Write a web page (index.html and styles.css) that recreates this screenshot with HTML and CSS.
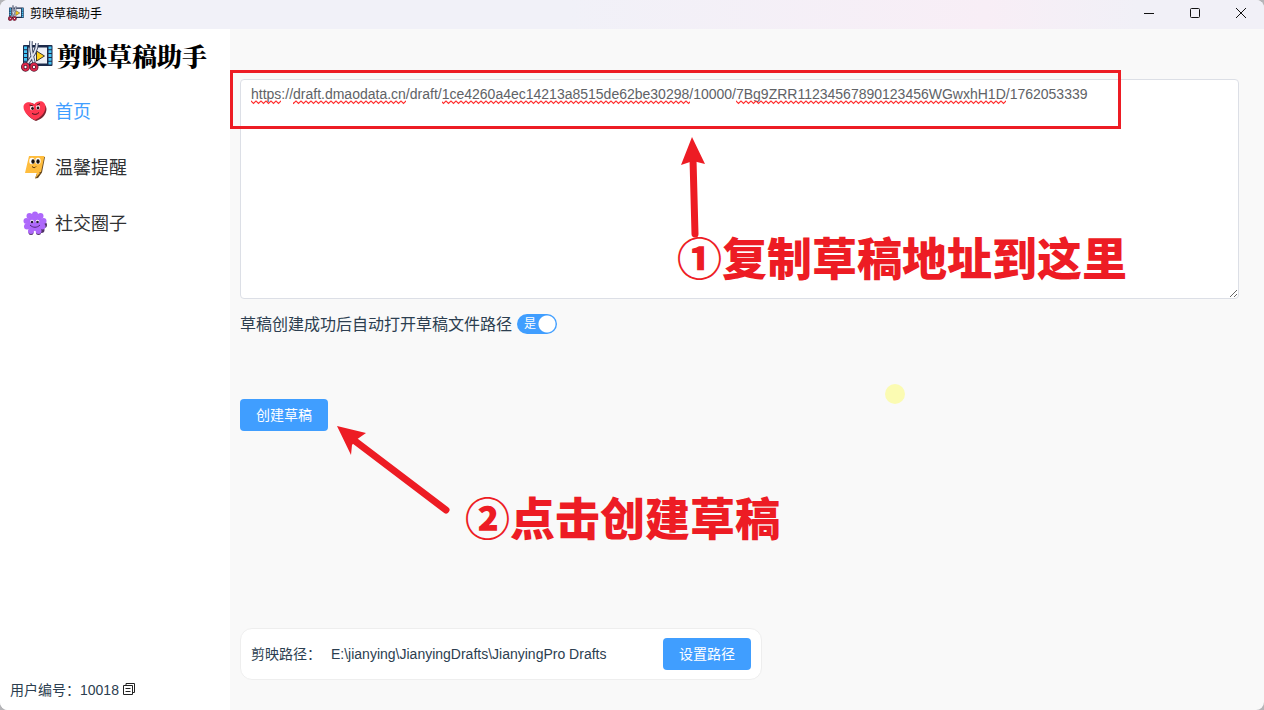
FILE: index.html
```html
<!DOCTYPE html>
<html lang="zh-CN">
<head>
  <meta charset="UTF-8" />
  <title>剪映草稿助手</title>
  <link rel="stylesheet" href="styles.css">
</head>
<body>

  <!-- 公用图标 -->
  <svg class="defs" width="0" height="0" aria-hidden="true">
    <symbol id="icon-logo" viewBox="0 0 32 32">
      <rect x="2" y="5" width="29.500" height="21" rx="1" fill="#1c2a4a" />
      <rect x="7.500" y="7.500" width="18.500" height="16" fill="#eef0f6" />
      <path d="M4.500 6.500v18M29 6.500v18" stroke="#45c4f5" stroke-width="3" stroke-dasharray="2.800 1" />
      <path d="M15.500 11v10l8-5z" fill="#ffd117" stroke="#3b3630" stroke-width="1" />
      <path d="M10 1c-1 8 1 15 3 22M16 3c0 8-5 14-10 21" stroke="#37415c" stroke-width="3.500" fill="none" />
      <path d="M10 1c-1 8 1 15 3 22M16 3c0 8-5 14-10 21" stroke="#dfe3ee" stroke-width="1.800" fill="none" />
      <ellipse cx="4.500" cy="27" rx="2.800" ry="3" fill="#fff" stroke="#4a1930" stroke-width="3.400" />
      <ellipse cx="13" cy="27" rx="2.800" ry="3" fill="#fff" stroke="#4a1930" stroke-width="3.400" />
      <ellipse cx="4.500" cy="27" rx="2.800" ry="3" fill="none" stroke="#db2849" stroke-width="1.900" />
      <ellipse cx="13" cy="27" rx="2.800" ry="3" fill="none" stroke="#db2849" stroke-width="1.900" />
    </symbol>
  </svg>

  <div class="window">
    <!-- 标题栏 -->
    <header class="title-bar">
      <svg class="title-icon"><use href="#icon-logo" /></svg>
      <span class="title-text">剪映草稿助手</span>
      <div class="window-buttons">
        <button type="button" aria-label="最小化"><svg viewBox="0 0 12 12"><path d="M1 6.500h10" /></svg></button>
        <button type="button" aria-label="最大化"><svg viewBox="0 0 12 12"><rect x="1.500" y="1.500" width="9" height="9" rx="1" /></svg></button>
        <button type="button" aria-label="关闭"><svg viewBox="0 0 12 12"><path d="M1 1l10 10M11 1L1 11" /></svg></button>
      </div>
    </header>

    <div class="content">
      <!-- 左侧菜单 -->
      <aside class="sidebar">
        <div class="logo">
          <svg class="logo-icon"><use href="#icon-logo" /></svg>
          <span>剪映草稿助手</span>
        </div>

        <nav class="menu">
          <a href="#" class="menu-item active">
            <svg viewBox="0 0 24 24">
              <path d="M13 22C7 20 2 14 1.500 9c0-5 6-7 11-3 5-4 11-1 11 4 0 5-4 10-10.500 12z" fill="#7d2430" />
              <path d="M12 21C6 18.500 .5 13 .5 8 .5 3 7 1.500 11 5.500 15 .5 22.500 1.500 22.500 8 22.500 14 17 19 12 21z" fill="#ff3850" />
              <ellipse cx="9" cy="9" rx="2" ry="2.300" fill="#fff" /><ellipse cx="15" cy="8.500" rx="2" ry="2.300" fill="#fff" />
              <circle cx="9.500" cy="9.500" r="1.400" fill="#241318" /><circle cx="15" cy="9" r="1.400" fill="#241318" />
              <path d="M6.500 6l3.500 1M14 6l3-1.500M9 14.500c3 1.500 5 1 7-1" stroke="#43131c" fill="none" />
            </svg>
            <span>首页</span>
          </a>
          <a href="#" class="menu-item">
            <svg viewBox="0 0 24 24">
              <path d="M7 2h15l-3 15.500-4 5.500-3 .5 2-5.500H3z" fill="#6b4b20" />
              <path d="M6 1h15.500l-3.500 16h-2l1 1-4.500 5 1.500-5H2z" fill="#ffbd3e" />
              <ellipse cx="9" cy="6" rx="2.700" ry="3.300" fill="#fff" /><ellipse cx="15" cy="6" rx="2.700" ry="3.300" fill="#fff" />
              <ellipse cx="10" cy="6.500" rx="1.700" ry="2.200" fill="#17120c" /><ellipse cx="15" cy="6.500" rx="1.700" ry="2.200" fill="#17120c" />
              <path d="M9 11.500c1.500 1.500 3 1.500 4 0" stroke="#59320b" fill="none" />
            </svg>
            <span>温馨提醒</span>
          </a>
          <a href="#" class="menu-item">
            <svg viewBox="0 0 24 24">
              <g fill="#513366">
                <circle cx="21" cy="14" r="3" /><circle cx="18.500" cy="19" r="3" /><circle cx="15.500" cy="21.500" r="2.500" /><circle cx="8" cy="21.500" r="2.500" />
              </g>
              <g fill="#ae68fb">
                <circle cx="12" cy="12" r="8" />
                <circle cx="12" cy="3.500" r="3" /><circle cx="17.500" cy="5" r="3" /><circle cx="20.500" cy="10" r="3" />
                <circle cx="19.500" cy="15.500" r="3" /><circle cx="15.500" cy="20" r="3" /><circle cx="8" cy="20" r="3" />
                <circle cx="4" cy="15.500" r="3" /><circle cx="3.500" cy="10" r="3" /><circle cx="6.500" cy="5" r="3" />
              </g>
              <path d="M11.700 20v4" stroke="#fff" stroke-width="1.500" />
              <circle cx="9" cy="10.500" r="1.800" fill="#fff" /><circle cx="14.500" cy="10.500" r="1.800" fill="#fff" />
              <circle cx="9" cy="11" r="1.300" fill="#241735" /><circle cx="14.500" cy="11" r="1.300" fill="#241735" />
              <path d="M7 14c3 3 7 3 10 0" stroke="#512679" fill="none" />
            </svg>
            <span>社交圈子</span>
          </a>
        </nav>

        <div class="user-info">
          <span>用户编号：10018</span>
          <button type="button" class="copy-button" aria-label="复制">
            <svg viewBox="0 0 14 14"><path d="M4 3V1.500h8.500v9H11M1.500 3.500h9v9h-9zM3.500 6.500h5M3.500 9.500h5" /></svg>
          </button>
        </div>
      </aside>

      <!-- 主要内容 -->
      <main class="main">
        <textarea class="draft-input" aria-label="草稿地址" spellcheck="false">https://draft.dmaodata.cn/draft/1ce4260a4ec14213a8515de62be30298/10000/7Bg9ZRR11234567890123456WGwxhH1D/1762053339</textarea>

        <div class="option">
          <label for="autoOpen">草稿创建成功后自动打开草稿文件路径</label>
          <span class="switch">
            <input type="checkbox" id="autoOpen" role="switch" checked>
            <span class="switch-text">是</span>
          </span>
        </div>

        <button type="button" class="btn create-button">创建草稿</button>

        <div class="path-card">
          <span class="path-label">剪映路径：</span>
          <span class="path-value">E:\jianying\JianyingDrafts\JianyingPro Drafts</span>
          <button type="button" class="btn">设置路径</button>
        </div>

        <!-- 操作标注 -->
        <svg class="marks" aria-hidden="true">
          <defs>
            <pattern id="wave" x="21" y="71" width="5" height="5" patternUnits="userSpaceOnUse">
              <path d="M-1 0l3.500 3.500L6 0" fill="none" stroke="#ff2b2b" stroke-width="1.200" />
            </pattern>
          </defs>
          <g fill="url(#wave)">
            <rect x="21" y="71" width="30" height="5" />
            <rect x="63" y="71" width="113" height="5" />
            <rect x="212" y="71" width="248" height="5" />
            <rect x="506" y="71" width="270" height="5" />
          </g>
          <rect x="1.500" y="42.500" width="888" height="56" fill="none" stroke="#ed1c24" stroke-width="3" />
          <g fill="#ed1c24" stroke="#ed1c24">
            <path d="M465 205l-2-75" stroke-width="7" stroke-linecap="round" />
            <path d="M462 108l13 27-12-3-12 4z" stroke="none" />
            <path d="M216 481l-91-69" stroke-width="7" stroke-linecap="round" />
            <path d="M107 397l29 7-10 7-4 5-1 10z" stroke="none" />
          </g>
          <circle cx="665" cy="365" r="10" fill="#fbfbb2" />
        </svg>
        <span class="note note-copy">①复制草稿地址到这里</span>
        <span class="note note-create">②点击创建草稿</span>
      </main>
    </div>
  </div>

</body>
</html>
```
FILE: styles.css
```css
* {
  box-sizing: border-box;
}
body {
  margin: 0;
  background-color: #b5b5b8;
  color: #2c3e50;
  font-family: "Liberation Sans", "Noto Sans CJK SC", sans-serif;
  font-size: 14px;
}
button {
  border: none;
  font-family: inherit;
  cursor: pointer;
}
.defs {
  position: absolute;
}
.window {
  display: flex;
  flex-direction: column;
  min-height: 100vh;
  border-radius: 8px;
  overflow: hidden;
  background-color: #f9f9f9;
}

/* 标题栏 */
.title-bar {
  display: flex;
  align-items: center;
  height: 29px;
  padding-left: 8px;
  padding-bottom: 3px;
  background: linear-gradient(90deg, #f1f1f8 45%, #f8eef6 78%, #f1f0f7 90%);
  color: #000;
}
.title-icon {
  width: 16px;
  height: 16px;
  margin-right: 6px;
}
.title-text {
  padding-bottom: 2px;
  font-size: 12px;
}
.window-buttons {
  display: flex;
  margin-left: auto;
}
.window-buttons button {
  display: flex;
  align-items: center;
  justify-content: center;
  width: 46px;
  height: 26px;
  padding: 0;
  background: none;
}
.window-buttons svg {
  width: 12px;
  height: 12px;
  fill: none;
  stroke: #111;
}

/* 左侧菜单 */
.content {
  display: flex;
  flex: 1;
}
.sidebar {
  display: flex;
  flex-direction: column;
  width: 230px;
  background-color: #fff;
}
.logo {
  display: flex;
  align-items: center;
  gap: 4px;
  height: 54px;
  padding-left: 21px;
  color: #000;
  font-family: "Noto Serif CJK SC", "Noto Sans CJK SC", serif;
  font-size: 25px;
  font-weight: 900;
  white-space: nowrap;
}
.logo span,
.menu-item span {
  padding-bottom: 2px;
}
.logo-icon {
  width: 32px;
  height: 32px;
}
.menu-item {
  display: flex;
  align-items: center;
  gap: 8px;
  height: 56px;
  padding-left: 23px;
  color: #303133;
  font-size: 18px;
  text-decoration: none;
}
.menu-item.active {
  color: #409eff;
}
.menu-item svg {
  width: 24px;
  height: 24px;
}
.user-info {
  display: flex;
  align-items: center;
  gap: 3px;
  margin-top: auto;
  padding: 10px 10px 11px;
}
.copy-button {
  display: flex;
  padding: 0;
  background: none;
}
.copy-button svg {
  width: 14px;
  height: 14px;
  fill: none;
  stroke: #222;
}

/* 主要内容 */
.main {
  position: relative;
  display: flex;
  flex: 1;
  flex-direction: column;
  align-items: flex-start;
  min-width: 0;
  padding: 50px 25px 30px 10px;
}
.draft-input {
  display: block;
  width: 100%;
  height: 220px;
  padding: 4px 10px;
  border: 1px solid #dcdfe6;
  border-radius: 4px;
  outline: none;
  background-color: #fff;
  color: #606266;
  font-family: inherit;
  font-size: 14px;
  line-height: 21px;
  resize: vertical;
}
.option {
  display: flex;
  align-items: center;
  gap: 5px;
  height: 50px;
  font-size: 16px;
}
.option label {
  padding-bottom: 2px;
}
.switch {
  position: relative;
  display: flex;
}
.switch input {
  appearance: none;
  width: 40px;
  height: 20px;
  margin: 0;
  border-radius: 10px;
  background: radial-gradient(circle at 30px 10px, #fff 8px, #409eff 9px);
  cursor: pointer;
}
.switch-text {
  position: absolute;
  left: 7px;
  color: #fff;
  font-size: 12px;
  line-height: 20px;
  pointer-events: none;
}
.btn {
  height: 32px;
  padding: 0 16px 2px;
  border-radius: 4px;
  background-color: #409eff;
  color: #fff;
  font-size: 14px;
}
.create-button {
  margin-top: 50px;
}
.path-card {
  display: flex;
  align-items: center;
  width: 522px;
  max-width: 100%;
  margin-top: auto;
  padding: 9px 10px;
  border: 1px solid #eee;
  border-radius: 12px;
  background-color: #fff;
}
.path-label {
  padding-bottom: 2px;
}
.path-value {
  flex: 1;
  padding-left: 10px;
}

/* 操作标注 */
.marks {
  position: absolute;
  top: 0;
  left: 0;
  width: 100%;
  height: 100%;
  pointer-events: none;
}
.note {
  position: absolute;
  color: #ed1c24;
  font-family: "Noto Sans CJK SC", sans-serif;
  font-size: 45px;
  font-weight: 900;
  line-height: 60px;
  white-space: nowrap;
  pointer-events: none;
}
.note-copy {
  top: 198px;
  left: 447px;
}
.note-create {
  top: 458px;
  left: 235px;
}
```
